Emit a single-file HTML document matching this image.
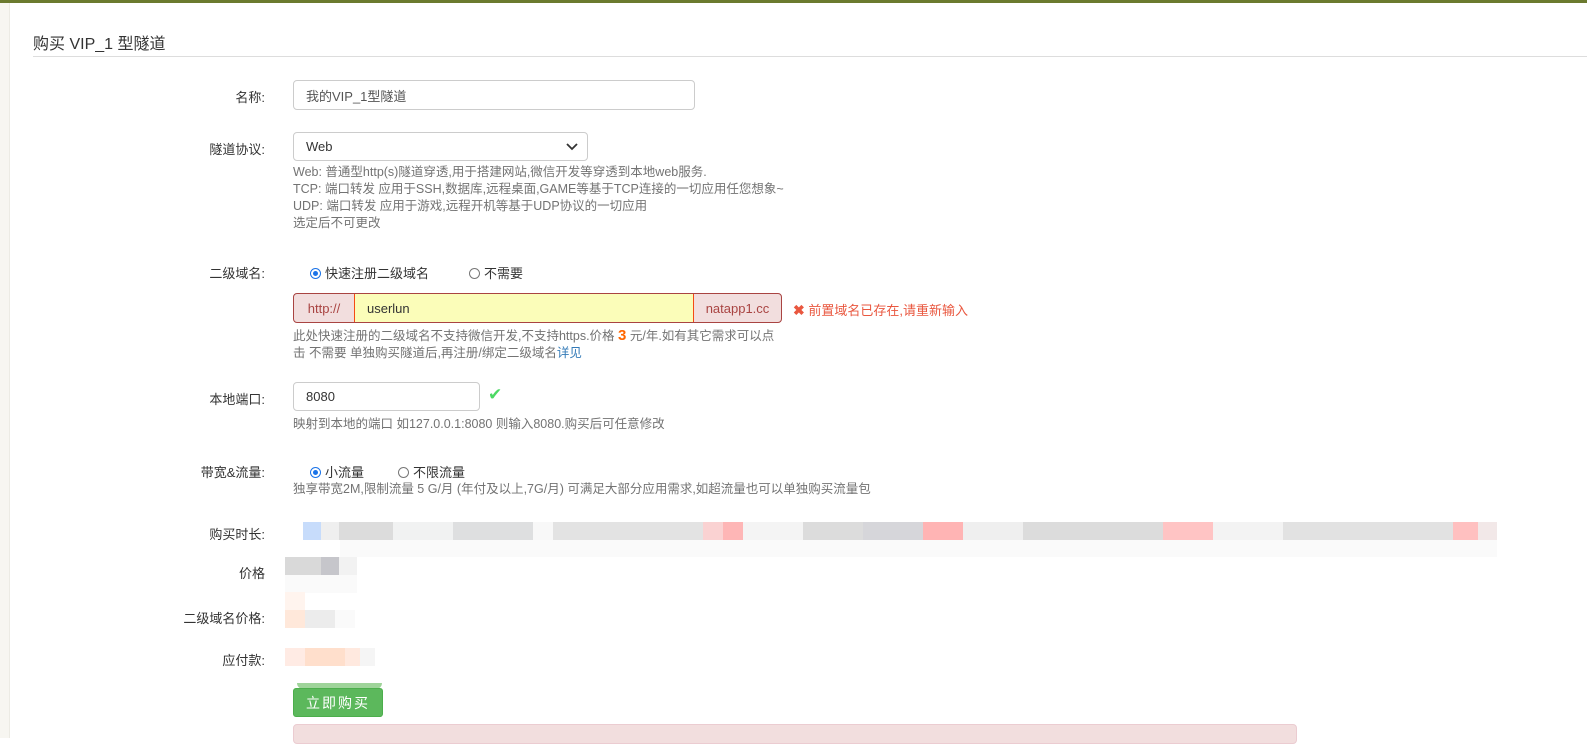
<!DOCTYPE html>
<html><head><meta charset="utf-8"><style>
*{box-sizing:border-box;margin:0;padding:0}
body{width:1587px;height:738px;overflow:hidden;background:#fff;font-family:"Liberation Sans","Noto Sans CJK SC",sans-serif;font-size:13px;color:#333;position:relative}
.top{position:absolute;left:0;top:0;width:1587px;height:3px;background:#6b7a2f}
.side{position:absolute;left:0;top:3px;width:10px;bottom:0;background:#f7f6f1;border-right:1px solid #ecebe4}
.a{position:absolute;white-space:nowrap}
.lbl{position:absolute;right:1322px;text-align:right;font-size:13px;color:#333}
.inp{position:absolute;border:1px solid #ccc;border-radius:4px;background:#fff;padding-left:12px;display:flex;align-items:center;font-size:13px;color:#555}
.help{position:absolute;left:293px;color:#737373;font-size:12.5px;line-height:17px;white-space:nowrap}
.rad{display:inline-block;width:11px;height:11px;border:1px solid #777;border-radius:50%;vertical-align:-1px;margin-right:4px;position:relative}
.rad.on{border-color:#1a73e8}
.rad.on:after{content:"";position:absolute;left:2px;top:2px;width:5px;height:5px;border-radius:50%;background:#1a73e8}
</style></head><body>
<div class="top"></div><div class="side"></div>
<div class="a" style="left:33px;top:30px;font-size:16px;color:#333">购买 VIP_1 型隧道</div>
<div class="a" style="left:33px;top:56px;width:1554px;height:1px;background:#ddd"></div>

<div class="lbl" style="top:87px">名称:</div>
<div class="inp" style="left:293px;top:80px;width:402px;height:30px">我的VIP_1型隧道</div>

<div class="lbl" style="top:139px">隧道协议:</div>
<div class="inp" style="left:293px;top:132px;width:295px;height:29px;color:#333">Web
<svg style="position:absolute;right:9px;top:10px" width="12" height="8" viewBox="0 0 12 8"><path d="M1 1l5 5 5-5" stroke="#333" stroke-width="1.8" fill="none"/></svg></div>
<div class="help" style="top:164px">Web: 普通型http(s)隧道穿透,用于搭建网站,微信开发等穿透到本地web服务.<br>TCP: 端口转发 应用于SSH,数据库,远程桌面,GAME等基于TCP连接的一切应用任您想象~<br>UDP: 端口转发 应用于游戏,远程开机等基于UDP协议的一切应用<br>选定后不可更改</div>

<div class="lbl" style="top:263px">二级域名:</div>
<div class="a" style="left:310px;top:263px"><span class="rad on"></span>快速注册二级域名</div>
<div class="a" style="left:469px;top:263px"><span class="rad"></span>不需要</div>
<div class="a" style="left:293px;top:293px;width:489px;height:30px;border:1px solid #a94442;border-radius:4px;background:#f2dede;display:flex">
<div style="width:61px;display:flex;align-items:center;justify-content:center;color:#a94442;border-right:1px solid #f44b14">http://</div>
<div style="width:339px;background:#fbfdb9;display:flex;align-items:center;padding-left:12px;color:#333;border-right:1px solid #f44b14">userlun</div>
<div style="flex:1;display:flex;align-items:center;justify-content:center;color:#a94442">natapp1.cc</div></div>
<div class="a" style="left:793px;top:300px;color:#e9573f"><b style="font-size:14px">✖</b> 前置域名已存在,请重新输入</div>
<div class="help" style="top:327px">此处快速注册的二级域名不支持微信开发,不支持https.价格 <b style="color:#f60;font-size:15px">3</b> 元/年.如有其它需求可以点<br>击 不需要 单独购买隧道后,再注册/绑定二级域名<span style="color:#337ab7">详见</span></div>

<div class="lbl" style="top:389px">本地端口:</div>
<div class="inp" style="left:293px;top:382px;width:187px;height:29px;color:#333">8080</div>
<div class="a" style="left:488px;top:385px;color:#4cd964;font-size:17px">✔</div>
<div class="help" style="top:416px">映射到本地的端口 如127.0.0.1:8080 则输入8080.购买后可任意修改</div>

<div class="lbl" style="top:462px">带宽&amp;流量:</div>
<div class="a" style="left:310px;top:462px"><span class="rad on"></span>小流量</div>
<div class="a" style="left:398px;top:462px"><span class="rad"></span>不限流量</div>
<div class="help" style="top:481px">独享带宽2M,限制流量 5 G/月 (年付及以上,7G/月) 可满足大部分应用需求,如超流量也可以单独购买流量包</div>

<div class="lbl" style="top:524px">购买时长:</div>
<div class="a" style="left:303px;top:522px;width:1194px;height:18px;background:linear-gradient(90deg,#c7dcfb 0 18px,#efefef 18px 36px,#dcdcdc 36px 90px,#f1f2f2 90px 150px,#dedfe0 150px 230px,#f8f8f8 230px 250px,#e3e3e3 250px 400px,#fad2d2 400px 420px,#feb6b6 420px 440px,#f4f4f4 440px 500px,#dcdcdc 500px 560px,#d6d6da 560px 620px,#ffb4b4 620px 660px,#efefef 660px 720px,#dcdcdc 720px 860px,#ffc4c4 860px 910px,#f3f3f3 910px 980px,#e2e2e2 980px 1150px,#ffc0c0 1150px 1175px,#f2e8e8 1175px 1194px)"></div>
<div class="a" style="left:340px;top:540px;width:1157px;height:17px;background:#fafafa"></div>

<div class="lbl" style="top:563px">价格</div>
<div class="a" style="left:285px;top:557px;width:72px;height:18px;background:linear-gradient(90deg,#d9d9d9 0 36px,#c6c6cb 36px 54px,#f2f2f2 54px)"></div>
<div class="a" style="left:285px;top:575px;width:72px;height:18px;background:#fafafa"></div>

<div class="lbl" style="top:608px">二级域名价格:</div>
<div class="a" style="left:285px;top:592px;width:20px;height:18px;background:#fff4ee"></div>
<div class="a" style="left:285px;top:610px;width:70px;height:18px;background:linear-gradient(90deg,#ffe8da 0 20px,#ececec 20px 50px,#fafafa 50px)"></div>

<div class="lbl" style="top:650px">应付款:</div>
<div class="a" style="left:285px;top:648px;width:90px;height:18px;background:linear-gradient(90deg,#ffebe4 0 20px,#ffdfcc 20px 60px,#ffe9df 60px 75px,#f5f5f5 75px)"></div>

<div class="a" style="left:297px;top:683px;width:85px;height:6px;background:#9fd49a;border-radius:0 0 20px 20px"></div>
<div class="a" style="left:293px;top:688px;width:90px;height:29px;background:#5cb85c;border:1px solid #4cae4c;border-radius:3px;color:#fff;font-size:14px;letter-spacing:2px;display:flex;align-items:center;justify-content:center">立即购买</div>
<div class="a" style="left:293px;top:724px;width:1004px;height:20px;background:#f2dede;border:1px solid #ebccd1;border-radius:4px"></div>
</body></html>
